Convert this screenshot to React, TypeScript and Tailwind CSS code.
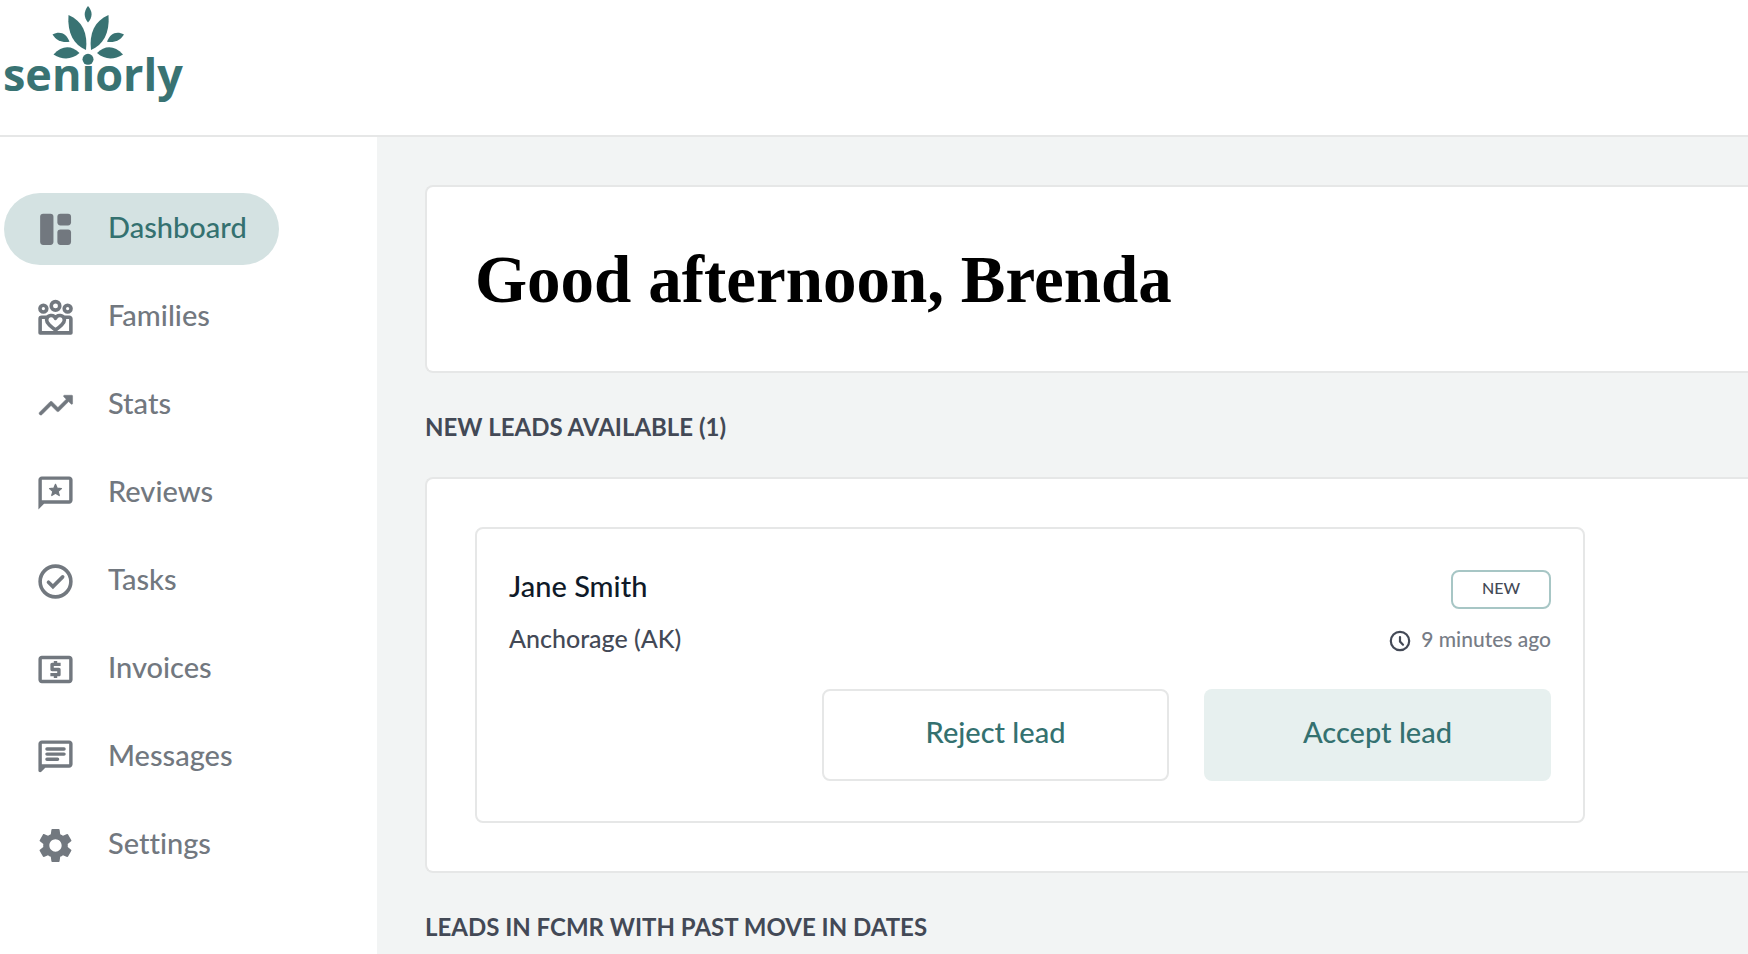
import type { ReactNode } from "react";
import { MdLocalAtm, MdSettings } from "react-icons/md";

const iconClass = "size-[41px] shrink-0 text-[#72787f]";

function Icon({ children }: { children: ReactNode }) {
  return (
    <svg viewBox="0 0 24 24" className={iconClass} fill="currentColor" aria-hidden="true">
      {children}
    </svg>
  );
}

function DashboardIcon() {
  return (
    <Icon>
      <rect x="3" y="2.8" width="7.8" height="18.2" rx="1.8" />
      <rect x="13.1" y="2.8" width="8" height="6.8" rx="1.8" />
      <rect x="13.1" y="12" width="8" height="9" rx="1.8" />
    </Icon>
  );
}

function FamiliesIcon() {
  return (
    <Icon>
      <g fill="none" stroke="currentColor" strokeWidth="2.1" strokeLinejoin="round">
        <circle cx="12" cy="5.2" r="2.5" />
        <circle cx="4.9" cy="6.8" r="2" />
        <circle cx="19.1" cy="6.8" r="2" />
        <path d="M6.9 11.9H3.9a.9.9 0 0 0-.9.9v8.2h18v-8.2a.9.9 0 0 0-.9-.9h-3" />
        <path d="M12 19.3c-2.6-1.9-5.200-3.800-5.200-5.900a2.700 2.700 0 0 1 5.200-.9 2.700 2.700 0 0 1 5.200.9c0 2.100-2.600 4-5.200 5.900z" />
      </g>
    </Icon>
  );
}

function StatsIcon() {
  return (
    <Icon>
      <path
        d="M16.85 6.85l1.44 1.44-4.88 4.88-3.29-3.29a.996.996 0 0 0-1.41 0l-6 6.01c-.39.39-.39 1.02 0 1.41.39.39 1.02.39 1.41 0L9.41 12l3.29 3.29c.39.39 1.02.39 1.41 0l5.590-5.580 1.440 1.440a.5.5 0 0 0 .85-.35V6.5a.48.48 0 0 0-.49-.5h-4.290a.5.5 0 0 0-.36.85z"
        stroke="currentColor"
        strokeWidth=".3"
      />
    </Icon>
  );
}

function ReviewsIcon() {
  return (
    <Icon>
      <path d="M20 2H4c-1.100 0-2 .9-2 2v17.300L5.300 18H20c1.100 0 2-.9 2-2V4c0-1.100-.9-2-2-2zm0 14H4V4h16v12z" />
      <path
        d="M12 6.600l1 2.300 2.500.2-1.900 1.650.6 2.450-2.200-1.300-2.200 1.300.6-2.450-1.900-1.650 2.500-.2z"
        stroke="currentColor"
        strokeWidth=".7"
        strokeLinejoin="round"
      />
    </Icon>
  );
}

function TasksIcon() {
  return (
    <Icon>
      <circle cx="12" cy="12" r="9" fill="none" stroke="currentColor" strokeWidth="2.1" />
      <path d="M7.900 12.400l2.600 2.600 5.700-5.700" fill="none" stroke="currentColor" strokeWidth="2.1" strokeLinecap="round" />
    </Icon>
  );
}

function MessagesIcon() {
  return (
    <Icon>
      <path d="M20 2H4c-1.100 0-2 .9-2 2v15.600c0 .9 1.100 1.300 1.700.7L6 18h14c1.100 0 2-.9 2-2V4c0-1.100-.9-2-2-2zm0 14H4V4h16v12z" />
      <path d="M7 7h10M7 10h10M7 13h6.200" stroke="currentColor" strokeWidth="2" strokeLinecap="round" />
    </Icon>
  );
}

function ClockIcon() {
  return (
    <svg viewBox="0 0 22 22" className="size-[22px] shrink-0 text-[#434956]" fill="none" stroke="currentColor" strokeWidth="2.2" strokeLinecap="round" aria-hidden="true">
      <circle cx="11" cy="11" r="9.200" />
      <path d="M11 7v4.500l3 3.200" />
    </svg>
  );
}

function Logo() {
  return (
    <svg viewBox="0 0 190 110" className="h-[110px] w-[190px] fill-[#397373]" role="img" aria-label="seniorly">
      <path d="M88 6c4.800 5.500 4.800 11 0 16.500c-4.400-5.500-4.400-11 0-16.500z" />
      <path d="M68.500 15c14 6 19.500 18.500 17.500 35c-12-5-19-17-17.500-35z" />
      <path d="M108.500 15c-14 6-19.500 18.500-17.500 35c12-5 19-17 17.500-35z" />
      <path d="M52.500 34.500c7.500-4 14-1 17 7.300c-7.500 1-13-1-17-7.300z" />
      <path d="M124 34.500c-7.500-4-14-1-17 7.300c7.500 1 13-1 17-7.300z" />
      <path d="M53.500 54.500c8.500-9.500 18-9.500 26-1.500c-8 7-17 7-26 1.500z" />
      <path d="M123 54.500c-8.500-9.500-18-9.500-26-1.500c8 7 17 7 26 1.500z" />
      <circle cx="88" cy="59.300" r="5.500" />
      <text x="3" y="91" className="font-['Open_Sans',sans-serif] text-[45px] font-bold">
        senıorly
      </text>
    </svg>
  );
}

const navItems: { label: string; icon: ReactNode; active?: boolean }[] = [
  { label: "Dashboard", icon: <DashboardIcon />, active: true },
  { label: "Families", icon: <FamiliesIcon /> },
  { label: "Stats", icon: <StatsIcon /> },
  { label: "Reviews", icon: <ReviewsIcon /> },
  { label: "Tasks", icon: <TasksIcon /> },
  { label: "Invoices", icon: <MdLocalAtm className={iconClass} /> },
  { label: "Messages", icon: <MessagesIcon /> },
  { label: "Settings", icon: <MdSettings className={iconClass} /> },
];

function SectionTitle({ children }: { children: ReactNode }) {
  return <h2 className="pt-[34px] pb-[30px] text-2xl leading-10 font-bold text-[#434956]">{children}</h2>;
}

export default function App() {
  return (
    <div className="flex min-h-screen flex-col bg-white font-['Lato',sans-serif] [font-variant-ligatures:none]">
      <header className="h-[137px] border-b-2 border-[#e6e7e7]">
        <a href="#" className="inline-block">
          <Logo />
        </a>
      </header>

      <div className="flex grow">
        <nav className="w-[377px] shrink-0 pt-14 pl-1">
          <ul className="flex flex-col items-start gap-4">
            {navItems.map((item) => (
              <li key={item.label}>
                <a
                  href="#"
                  aria-current={item.active ? "page" : undefined}
                  className={`flex h-[72px] items-center gap-8 rounded-full pr-8 pl-[31px] text-[29px] leading-9 font-medium ${
                    item.active ? "bg-[#d4e2e2] text-[#347170]" : "text-[#72787f]"
                  }`}
                >
                  {item.icon}
                  <span className="pb-1">{item.label}</span>
                </a>
              </li>
            ))}
          </ul>
        </nav>

        <main className="min-w-0 grow bg-[#f2f4f4] pt-12 pl-12">
          <section className="rounded-l-lg border-2 border-r-0 border-[#e6e7e7] bg-white p-12">
            <h1 className="font-['Liberation_Serif',serif] text-[67px] leading-[88px] font-bold text-black">
              Good afternoon, Brenda
            </h1>
          </section>

          <SectionTitle>NEW LEADS AVAILABLE (1)</SectionTitle>

          <section className="rounded-l-lg border-2 border-r-0 border-[#e6e7e7] bg-white p-12">
            <article className="max-w-[1110px] rounded-lg border-2 border-[#e6e7e7] px-8 pt-[41px] pb-10">
              <div className="flex items-start justify-between">
                <div>
                  <h3 className="text-[29px] leading-8 font-medium text-[#0f1a28]">Jane Smith</h3>
                  <p className="mt-5 text-[25px] leading-8 font-medium text-[#434956]">Anchorage (AK)</p>
                </div>
                <div className="flex flex-col items-end">
                  <span className="flex h-[39px] w-[100px] items-center justify-center rounded-lg border-2 border-[#a7c6c5] pb-1 text-base font-medium text-[#434956]">
                    NEW
                  </span>
                  <p className="mt-4 flex h-8 items-center gap-2.5 text-[21px] leading-7 font-medium text-[#777c86]">
                    <ClockIcon />
                    <span className="pb-1">9 minutes ago</span>
                  </p>
                </div>
              </div>
              <div className="mt-8 flex justify-end gap-[35px]">
                <button type="button" className="h-[92px] w-[347px] rounded-lg border-2 border-[#e6e7e7] bg-white pb-1.5 text-[29px] font-medium text-[#347170]">
                  Reject lead
                </button>
                <button type="button" className="h-[92px] w-[347px] rounded-lg bg-[#e7f0ef] pb-1.5 text-[29px] font-medium text-[#347170]">
                  Accept lead
                </button>
              </div>
            </article>
          </section>

          <SectionTitle>LEADS IN FCMR WITH PAST MOVE IN DATES</SectionTitle>
        </main>
      </div>
    </div>
  );
}
